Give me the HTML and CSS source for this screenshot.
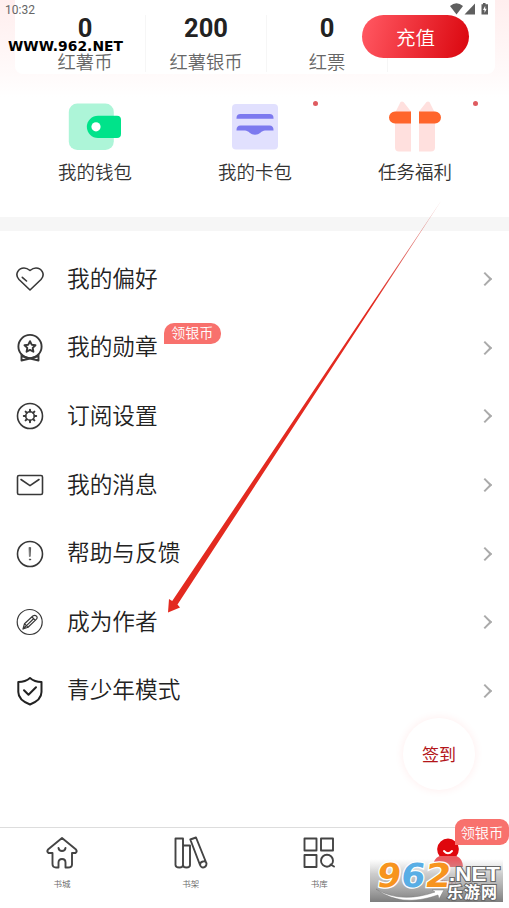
FILE: index.html
```html
<!DOCTYPE html>
<html lang="zh-CN">
<head>
<meta charset="utf-8">
<title>我的</title>
<link rel="stylesheet" href="styles.css">
</head>
<body>
<div class="screen">
  <div class="status">
    <span>10:32</span>
    <svg class="status-icons" width="40" height="12" viewBox="0 0 40 12" fill="#5f5f5f">
      <path d="M0 3Q6.5-2.600 13 3L6.500 11.500Z"/>
      <path d="M25 .5V11.500H14.500Z"/>
      <path d="M31.500 1.200h1.500V0h2.500v1.200h2.500V11.500h-6.500Z"/>
      <path d="M35.200 2.700l-2.200 4.300h1.500v3l2.200-4.300h-1.500Z" fill="#fff"/>
    </svg>
  </div>
  <header class="account">
    <div class="wallet-card">
      <div class="stat"><b>0</b><span>红薯币</span></div>
      <div class="stat"><b>200</b><span>红薯银币</span></div>
      <div class="stat"><b>0</b><span>红票</span></div>
    </div>
    <button class="recharge">充值</button>
    <svg class="site-mark" width="118" height="14" viewBox="0 0 118 14"><text x="0" y="11.500" textLength="115" lengthAdjust="spacingAndGlyphs">WWW.962.NET</text></svg>
  </header>

  <section class="services">
    <div class="service">
      <svg width="54" height="52" viewBox="0 0 54 52">
        <rect x=".8" y="3.500" width="45" height="46.500" rx="8.500" fill="#adf5d8"/>
        <path d="M30 15.700H49Q53 15.700 53 19.700V34Q53 38 49 38H30A11.150 11.150 0 0 1 30 15.700Z" fill="#00e38a"/>
        <circle cx="28" cy="26.800" r="4.600" fill="#fff"/>
      </svg>
      <span>我的钱包</span>
    </div>
    <div class="service dotted">
      <svg width="54" height="52" viewBox="0 0 54 52">
        <rect x="4" y="4" width="46" height="45.500" rx="4" fill="#e1e0fe"/>
        <path d="M8.500 18.700V18Q8.500 14 12.500 14H41.500Q45.500 14 45.500 18V18.700Z" fill="#7c79ef"/>
        <path d="M8.500 30.500V30Q8.500 25.500 12.500 25.500H41.500Q45.500 25.500 45.500 30V30.500H37C33.500 30.500 31.500 34.800 27 34.800S20.500 30.500 17 30.500Z" fill="#7c79ef"/>
      </svg>
      <span>我的卡包</span>
    </div>
    <div class="service dotted">
      <svg width="54" height="52" viewBox="0 0 54 52">
        <path d="M7 13L12.500 2Q14 1 15.500 2L23 11.500V51.500H11Q7 51.500 7 47.500ZM31 11.500L38.500 2Q40 1 41.500 2L47 13V47.500Q47 51.500 43 51.500H31Z" fill="#ffe0de"/>
        <path d="M23 11.500V23.500H7A6 6 0 0 1 7 11.500ZM31 11.500H47A6 6 0 0 1 47 23.500H31Z" fill="#ff652b"/>
      </svg>
      <span>任务福利</span>
    </div>
  </section>

  <main class="menu">
    <div class="row">
      <svg class="icon" viewBox="0 0 30 30"><path d="M15 26L4 15.500C-1 10 4 4 9 4Q12 4 15 6.500Q18 4 21 4C26 4 31 10 26 15.500ZM7.300 13.300L11.500 17"/></svg>
      <span class="name">我的偏好</span><i class="chevron"></i>
    </div>
    <div class="row">
      <svg class="icon medal" viewBox="0 0 30 30"><circle cx="15" cy="13.500" r="11.600"/><path d="M15 8.200L16.700 11.700L20.500 12.200L17.700 14.900L18.400 18.700L15 16.900L11.600 18.700L12.300 14.900L9.500 12.200L13.300 11.700Z"/><path d="M6.500 21.500V27.500L15 25.500L23.500 27.500V21.500M8 23.500L15 25.500L22 23.500"/></svg>
      <span class="name">我的勋章</span><em class="tag">领银币</em><i class="chevron"></i>
    </div>
    <div class="row">
      <svg class="icon" viewBox="0 0 30 30"><circle cx="15" cy="15" r="12.500"/><circle cx="15" cy="15" r="4.300"/><path class="teeth" d="M15 8.800V10.500M15 19.500V21.200M8.800 15H10.500M19.500 15H21.200M10.600 10.600L11.800 11.800M18.200 18.200L19.400 19.400M10.600 19.400L11.800 18.200M18.200 11.800L19.400 10.600"/></svg>
      <span class="name">订阅设置</span><i class="chevron"></i>
    </div>
    <div class="row">
      <svg class="icon" viewBox="0 0 30 30"><rect x="2.500" y="5.500" width="25" height="19" rx="1.500"/><path d="M6 9.500L15 15.700L24 9.500"/></svg>
      <span class="name">我的消息</span><i class="chevron"></i>
    </div>
    <div class="row">
      <svg class="icon" viewBox="0 0 30 30"><circle cx="15" cy="15" r="12.500"/><path d="M14.300 8.500H15.700L15.200 17.500H14.800Z" fill="#333" stroke-width=".5"/><circle cx="15" cy="20.500" r=".7" fill="#333" stroke-width=".5"/></svg>
      <span class="name">帮助与反馈</span><i class="chevron"></i>
    </div>
    <div class="row">
      <svg class="icon thin" viewBox="0 0 30 30"><circle cx="14.700" cy="15" r="12.500"/><path d="M8 22L9.500 16.700L17.800 9Q20 7.500 21.500 9.200T21 12.600L13 20.300ZM17 10L20.300 13.300M18.300 12L11.500 18.600M9.500 16.700L13 20.300M8 22L10.500 19.500"/></svg>
      <span class="name">成为作者</span><i class="chevron"></i>
    </div>
    <div class="row">
      <svg class="icon dark" viewBox="0 0 30 30"><path d="M15 2Q19.500 6 26.500 6V16Q26.500 24 15 28.500Q3.300 24 3.300 16V6Q10.500 6 15 2ZM9 14.300L13.500 18.800L21 11.200"/></svg>
      <span class="name">青少年模式</span><i class="chevron"></i>
    </div>
  </main>

  <nav class="tabs">
    <div class="tab">
      <svg width="36" height="36" viewBox="0 0 36 36"><path d="M18 3L32 14.500Q33.500 16.500 31.500 18H28V29.500Q28 32.500 24 32.500H21.500V27.500Q21.500 24 18 24T14.500 27.500V32.500H12Q8.500 32.500 8.500 29V18H4.500Q2.500 16.500 4 14.500ZM14.500 13Q15 16 18 16T21.500 13"/></svg>
      <span>书城</span>
    </div>
    <div class="tab">
      <svg width="36" height="36" viewBox="0 0 36 36"><path d="M2.500 3.500H10V30Q10 32.500 6.300 32.500T2.500 30ZM10 10.500H17V30Q17 32.500 13.500 32.500T10 30M17.300 4.500L23 2.500L33.500 28.500Q33.500 32 30 32.500Q28 32.500 27 30ZM27 30Q27 27 30 26.500T33.500 28.500"/></svg>
      <span>书架</span>
    </div>
    <div class="tab">
      <svg width="36" height="36" viewBox="0 0 36 36"><path d="M3.500 3.500H15.500V15.500H3.500ZM20 3.500H32V15.500H20ZM3.500 20H15.500V32H3.500ZM29.500 29.500L33 31.500"/><circle cx="26" cy="25.700" r="6"/></svg>
      <span>书库</span>
    </div>
    <div class="tab active">
      <svg width="36" height="36" viewBox="0 0 36 36"><path d="M9.500 21A10.800 10.800 0 1 1 26.500 21Z" fill="#df070d" stroke="none"/><path d="M9.500 21H26.500Q33 24 33 32H3Q3 24 9.500 21Z" fill="#ea5a60" stroke="none"/><path d="M14 16Q18 20.500 22 16" stroke="#fff"/></svg>
      <span>我的</span>
      <em class="bubble">领银币</em>
    </div>
  </nav>

  <button class="checkin">签到</button>

  <svg class="pointer" width="290" height="420" viewBox="0 0 290 420">
    <defs><linearGradient id="fade" x1="0" y1="1" x2="0" y2="0"><stop offset=".75" stop-color="#e32a20"/><stop offset="1" stop-color="#c62f2a" stop-opacity=".45"/></linearGradient></defs>
    <path d="M8 412.500L9 399L12.200 401L281 1L17.500 404.500L20 407.500Z" fill="url(#fade)"/>
  </svg>

  <svg class="site-logo" width="139" height="50" viewBox="0 0 139 50">
    <defs><linearGradient id="shade" x1="0" y1="0" x2="0" y2="1"><stop offset="0" stop-color="#bbb" stop-opacity="0"/><stop offset=".35" stop-color="#aaa" stop-opacity=".6"/><stop offset="1" stop-color="#777" stop-opacity=".95"/></linearGradient></defs>
    <rect x="0" y="3" width="133" height="43" fill="url(#shade)"/>
    <g class="digits" transform="translate(4 0) skewX(-8)">
      <text x="6" y="31" textLength="24" lengthAdjust="spacingAndGlyphs" fill="#f7941e">9</text>
      <text x="30" y="31" textLength="24" lengthAdjust="spacingAndGlyphs" fill="#59aee5">6</text>
      <text x="54" y="31" textLength="26" lengthAdjust="spacingAndGlyphs" fill="#f7941e">2</text>
    </g>
    <text class="net" x="79" y="25" textLength="51" lengthAdjust="spacingAndGlyphs">.NET</text>
    <text class="site-name" x="77" y="42" textLength="50">乐游网</text>
    <path d="M6 33Q31 48 65 36L62 34L74 34L69 43L68 39Q31 52 6 33Z" fill="#fff" stroke="#777" stroke-width=".5"/>
  </svg>
</div>
</body>
</html>
```
FILE: styles.css
```css
* { box-sizing: border-box; }
body {
  margin: 0;
  background: #fff;
  font-family: Roboto, "Noto Sans CJK SC", sans-serif;
  color: #222;
}
.screen {
  position: relative;
  width: 509px;
  height: 908px;
  overflow: hidden;
  display: flex;
  flex-direction: column;
}
.status {
  position: absolute;
  z-index: 3;
  top: 3px;
  left: 5px;
  right: 19px;
  display: flex;
  justify-content: space-between;
  font-size: 12px;
  line-height: 14px;
  color: #666;
}
.account {
  position: relative;
  height: 97px;
  padding: 0 14px 0 15px;
  background: linear-gradient(#ffeeee, #fff6f6 50px, #fffafa 74px, #fff);
}
.wallet-card {
  display: flex;
  height: 74px;
  padding: 15px 10px 2px;
  background: #fff;
  border-radius: 0 0 8px 8px;
}
.stat {
  width: 121px;
  display: flex;
  flex-direction: column;
  align-items: center;
  border-right: 1px solid #f6f6f6;
}
.stat b {
  font-size: 25.500px;
  line-height: 26px;
}
.stat span {
  margin-top: 8px;
  font-size: 18.300px;
  line-height: 27px;
  color: #666;
  font-weight: 350;
}
.recharge {
  position: absolute;
  left: 362px;
  top: 15px;
  width: 107px;
  height: 43px;
  padding: 0;
  border: 0;
  border-radius: 22px;
  background: linear-gradient(105deg, #ff555f 5%, #dc0a12 95%);
  color: #fff;
  font: 350 19.500px/43px "Noto Sans CJK SC", sans-serif;
}
.site-mark {
  position: absolute;
  left: 8px;
  top: 39px;
}
.site-mark text {
  font: bold 14px "DejaVu Sans", sans-serif;
  fill: #000;
}
.services {
  display: flex;
  height: 120px;
  padding: 3px 14px 0 15px;
}
.service {
  position: relative;
  width: 160px;
  display: flex;
  flex-direction: column;
  align-items: center;
}
.service span {
  margin-top: 7px;
  font-size: 18.500px;
  line-height: 28px;
  color: #333;
  font-weight: 350;
}
.dotted::after {
  content: "";
  position: absolute;
  left: 138px;
  top: 1px;
  width: 5px;
  height: 5px;
  border-radius: 50%;
  background: #df5b60;
}
.menu {
  border-top: 14px solid #f6f6f6;
  padding: 14px 15px 0;
}
.row {
  display: flex;
  align-items: center;
  height: 68.580px;
}
.icon {
  width: 30px;
  height: 30px;
  fill: none;
  stroke: #383838;
  stroke-width: 1.600;
  stroke-linejoin: round;
  stroke-linecap: round;
}
.medal { stroke-width: 1.900; }
.thin { stroke-width: 1.200; }
.dark { stroke: #222; stroke-width: 2; }
.teeth { stroke-width: 2; }
.name {
  margin-left: 22px;
  font-size: 22.700px;
  line-height: 32px;
  margin-top: 1px;
  font-weight: 350;
}
.tag {
  align-self: flex-start;
  margin: 9px 0 0 6px;
  width: 57px;
  height: 21px;
  border-radius: 10px 10px 10px 0;
  background: #f8716d;
  color: #fff;
  font: 350 14px/19px "Noto Sans CJK SC", sans-serif;
  text-align: center;
}
.chevron {
  width: 10px;
  height: 10px;
  margin: 0 4px 0 auto;
  border: solid #aaa;
  border-width: 2px 2px 0 0;
  transform: rotate(45deg);
}
.tabs {
  display: flex;
  justify-content: space-between;
  margin-top: auto;
  height: 81px;
  padding: 7px 21px 0 22px;
  border-top: 1px solid #ddd;
}
.tab {
  position: relative;
  width: 80px;
  display: flex;
  flex-direction: column;
  align-items: center;
}
.tab svg {
  fill: none;
  stroke: #444;
  stroke-width: 1.900;
  stroke-linejoin: round;
  stroke-linecap: round;
}
.tab span {
  margin-top: 6px;
  font-size: 8.500px;
  line-height: 14px;
  color: #666;
  font-weight: 350;
}
.tab.active span { color: #d33; }
.bubble {
  position: absolute;
  left: 47px;
  top: -16px;
  width: 54px;
  height: 26px;
  border-radius: 9px 9px 9px 0;
  background: #f8716d;
  color: #fff;
  font: 350 14.200px/26px "Noto Sans CJK SC", sans-serif;
  text-align: center;
}
.checkin {
  position: absolute;
  left: 403px;
  top: 718px;
  width: 72px;
  height: 72px;
  padding: 0;
  border: 0;
  border-radius: 50%;
  background: #fff;
  box-shadow: 0 0 8px 1px #fff0f0;
  color: #b3161a;
  font: 17px/72px "Noto Sans CJK SC", sans-serif;
}
.pointer {
  position: absolute;
  left: 160px;
  top: 200px;
}
.site-logo {
  position: absolute;
  left: 370px;
  top: 856px;
}
.digits text {
  font: bold 33px "DejaVu Sans", sans-serif;
  stroke: #fff;
  stroke-width: 2.500px;
  paint-order: stroke;
}
.net {
  font: bold 20px "Liberation Sans", sans-serif;
  fill: #fff;
  stroke: #666;
  stroke-width: 2px;
  paint-order: stroke;
}
.site-name {
  font: bold 16px "Noto Sans CJK SC", sans-serif;
  fill: #fff;
  stroke: #666;
  stroke-width: 2px;
  paint-order: stroke;
}
```
